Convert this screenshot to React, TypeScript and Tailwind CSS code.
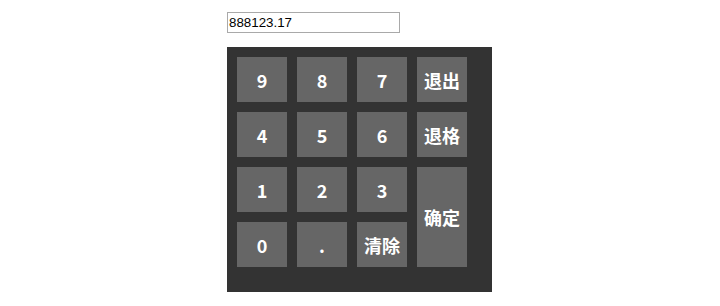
const keys: { label: string; cls?: string }[] = [
  { label: '9' },
  { label: '8' },
  { label: '7' },
  { label: '退出' },
  { label: '4' },
  { label: '5' },
  { label: '6' },
  { label: '退格' },
  { label: '1' },
  { label: '2' },
  { label: '3' },
  { label: '确定', cls: 'row-span-2' },
  { label: '0' },
  { label: '.' },
  { label: '清除' },
]

export default function App() {
  return (
    <div className="w-[720px] h-[306px] bg-white">
      <div className="w-[265px] ml-[227px] pt-[12px]">
        <input
          type="text"
          defaultValue="888123.17"
          className="block w-[173px] h-[21px] border border-[#a9a9a9] px-[1px] text-[13.33px] text-black outline-none"
          style={{ fontFamily: '"Liberation Sans", Arial, sans-serif' }}
        />
        <div className="mt-[14px] h-[245px] bg-[#333333] pt-[10px] pl-[10px]">
          <div className="grid grid-cols-[repeat(4,50px)] grid-rows-[repeat(4,45px)] gap-[10px]">
            {keys.map((k) => (
              <button
                key={k.label}
                type="button"
                className={`flex items-center justify-center bg-[#666666] text-white font-bold text-[18px] leading-none ${k.cls ?? ''}`}
                style={{ fontFamily: '"Noto Sans CJK SC", "Noto Sans", sans-serif' }}
              >
                {k.label}
              </button>
            ))}
          </div>
        </div>
      </div>
    </div>
  )
}
